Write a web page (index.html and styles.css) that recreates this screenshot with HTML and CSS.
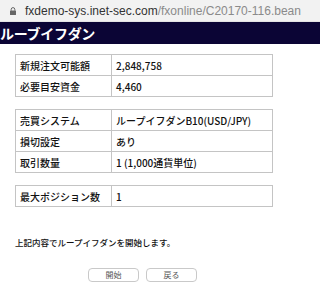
FILE: index.html
```html
<!DOCTYPE html>
<html lang="ja">
<head>
<meta charset="utf-8">
<title>ループイフダン</title>
<link rel="stylesheet" href="styles.css">
</head>
<body>
<div class="addr">
  <svg class="lock" width="6" height="8" viewBox="0 0 6 8"><path d="M1.2 3.6V2.4a1.8 1.8 0 0 1 3.6 0v1.2" fill="none" stroke="#666" stroke-width="1"/><rect x="0" y="3.5" width="6" height="4.5" rx="0.6" fill="#666"/></svg>
  <span class="host">fxdemo-sys.inet-sec.com</span><span class="path">/fxonline/C20170-116.bean</span>
</div>
<div class="title">ルーブイフダン</div>
<main class="content">
  <table class="grid">
    <tr><th>新規注文可能額</th><td>2,848,758</td></tr>
    <tr><th>必要目安資金</th><td>4,460</td></tr>
  </table>
  <table class="grid">
    <tr><th>売買システム</th><td>ループイフダンB10(USD/JPY)</td></tr>
    <tr><th>損切設定</th><td>あり</td></tr>
    <tr><th>取引数量</th><td>1 (1,000通貨単位)</td></tr>
  </table>
  <table class="grid">
    <tr><th>最大ポジション数</th><td>1</td></tr>
  </table>
  <p class="msg">上記内容でループイフダンを開始します。</p>
  <div class="buttons">
    <button class="btn">開始</button>
    <button class="btn">戻る</button>
  </div>
</main>
</body>
</html>
```
FILE: styles.css
```css
html, body {
  margin: 0;
  padding: 0;
  background: #ffffff;
}
body {
  font-family: "Liberation Sans", "Noto Sans CJK JP", sans-serif;
  color: #1a1a1a;
}
.addr {
  height: 22px;
  background: #f2f2f2;
  display: flex;
  align-items: center;
  padding-left: 10px;
  font-size: 12px;
  box-sizing: border-box;
  border-bottom: 1px solid #e4e4e4;
}
.lock {
  margin-right: 9px;
  flex: none;
}
.host { color: #333333; }
.path { color: #8a8a8a; }
.title {
  height: 22px;
  background: #0b0535;
  color: #ffffff;
  font-family: "Noto Sans CJK JP", sans-serif;
  font-weight: 700;
  font-size: 14px;
  line-height: 22px;
  padding-left: 0;
  letter-spacing: -0.3px;
}
.content {
  display: flex;
  flex-direction: column;
  padding: 10px 0 0 15px;
}
.grid {
  width: 258px;
  border-collapse: collapse;
  border-top: 1px solid #a8a8a8;
  border-left: 1px solid #a8a8a8;
  border-right: 1px solid #808080;
  border-bottom: 1px solid #808080;
  margin-bottom: 12px;
  font-family: "Noto Sans CJK JP", sans-serif;
  font-size: 10px;
}
.grid th, .grid td {
  height: 20px;
  padding: 0 0 0 4px;
  border: 1px solid #c4c4c4;
  text-align: left;
  font-weight: 500;
  color: #111111;
}
.grid th {
  width: 91px;
}
.msg {
  margin: 16px 0 0 0;
  font-family: "Noto Sans CJK JP", sans-serif;
  font-size: 8.5px;
  font-weight: 500;
  line-height: 14px;
  color: #111111;
}
.buttons {
  display: flex;
  gap: 7px;
  margin: 19px 0 0 73px;
}
.btn {
  width: 51px;
  height: 14px;
  padding: 0;
  border: 1px solid #c9c9c9;
  border-radius: 4px;
  background: #ffffff;
  font-family: "Noto Sans CJK JP", sans-serif;
  font-size: 8px;
  color: #555555;
  line-height: 12px;
}
```
